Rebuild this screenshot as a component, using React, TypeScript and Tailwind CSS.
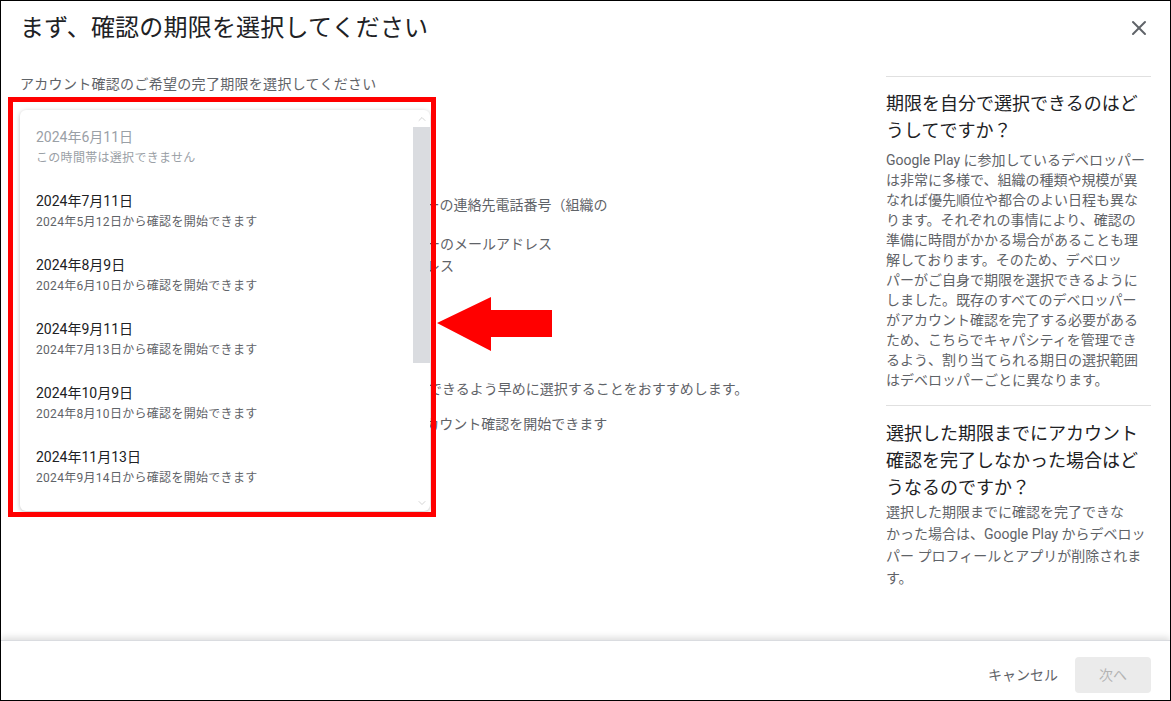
import { X, ChevronUp, ChevronDown } from 'lucide-react'

const options = [
  { date: '2024年6月11日', note: 'この時間帯は選択できません', disabled: true },
  { date: '2024年7月11日', note: '2024年5月12日から確認を開始できます' },
  { date: '2024年8月9日', note: '2024年6月10日から確認を開始できます' },
  { date: '2024年9月11日', note: '2024年7月13日から確認を開始できます' },
  { date: '2024年10月9日', note: '2024年8月10日から確認を開始できます' },
  { date: '2024年11月13日', note: '2024年9月14日から確認を開始できます' },
]

const whyLines = [
  'Google Play に参加しているデベロッパー',
  'は非常に多様で、組織の種類や規模が異',
  'なれば優先順位や都合のよい日程も異な',
  'ります。それぞれの事情により、確認の',
  '準備に時間がかかる場合があることも理',
  '解しております。そのため、デベロッ',
  'パーがご自身で期限を選択できるように',
  'しました。既存のすべてのデベロッパー',
  'がアカウント確認を完了する必要がある',
  'ため、こちらでキャパシティを管理でき',
  'るよう、割り当てられる期日の選択範囲',
  'はデベロッパーごとに異なります。',
]

const missLines = [
  '選択した期限までに確認を完了できな',
  'かった場合は、Google Play からデベロッ',
  'パー プロフィールとアプリが削除されま',
  'す。',
]

function Lines({ lines }: { lines: string[] }) {
  return (
    <>
      {lines.map((l, i) => (
        <div key={i} className="whitespace-nowrap">
          {l}
        </div>
      ))}
    </>
  )
}

export default function App() {
  return (
    <div
      className="relative w-[1171px] h-[701px] border border-black bg-white flex flex-col overflow-hidden"
      style={{ fontFamily: 'Roboto, "Noto Sans CJK JP", sans-serif' }}
    >
      {/* Header */}
      <div className="flex items-center justify-between pl-[19px] pr-[19px] pt-[11px]">
        <h1 className="text-[24px] leading-[32px] tracking-[0.2px] text-[#202124]">
          まず、確認の期限を選択してください
        </h1>
        <button className="w-6 h-6 flex items-center justify-center text-[#5f6368]">
          <X size={24} strokeWidth={2} />
        </button>
      </div>

      {/* Body */}
      <div className="flex-1 flex">
        <div className="flex-1 pl-[19px] text-[14px] text-[#5f6368]">
          <p className="pt-[30px] leading-[20px] tracking-[0.3px]">
            アカウント確認のご希望の完了期限を選択してください
          </p>
          <div className="mt-[100px] leading-[22px] whitespace-nowrap">
            ・アカウント所有者として登録した、確認済みの個人デベロッパーの連絡先電話番号（組織の
          </div>
          <div className="mt-[17px] leading-[22px] whitespace-nowrap">
            <div>・確認のためお客様の現在のアカウントに登録されたデベロッパーのメールアドレス</div>
            <div>・アカウント所有者が登録した、組織の正式な連絡先メールアドレス</div>
          </div>
          <div className="mt-[101px] leading-[22px] whitespace-nowrap">
            アカウントの確認手続きを,選択した期限までに余裕をもって完了できるよう早めに選択することをおすすめします。
          </div>
          <div className="mt-[13px] leading-[22px] whitespace-nowrap">
            選択した期限に応じて、下記の日付から準備が整い次第すぐにアカウント確認を開始できます
          </div>
        </div>

        <aside className="w-[265px] mr-[19px] mt-[32px] border-t border-[#e0e0e0]">
          <div className="pt-[13px] pb-[15px] border-b border-[#e0e0e0]">
            <h2 className="text-[18px] leading-[27px] text-[#202124]">
              <Lines lines={['期限を自分で選択できるのはど', 'うしてですか？']} />
            </h2>
            <div className="mt-[6px] text-[14px] leading-[20px] text-[#5f6368]">
              <Lines lines={whyLines} />
            </div>
          </div>
          <div className="pt-[14px]">
            <h2 className="text-[18px] leading-[27px] text-[#202124]">
              <Lines
                lines={[
                  '選択した期限までにアカウント',
                  '確認を完了しなかった場合はど',
                  'うなるのですか？',
                ]}
              />
            </h2>
            <div className="text-[14px] leading-[22px] text-[#5f6368]">
              <Lines lines={missLines} />
            </div>
          </div>
        </aside>
      </div>

      {/* Footer */}
      <div className="h-[60px] border-t border-[#dadce0] shadow-[0_-3px_6px_rgba(0,0,0,0.12)] flex justify-end items-start pt-[16px] pr-[19px]">
        <button className="h-[36px] px-4 text-[14px] text-[#5f6368]">キャンセル</button>
        <button className="ml-px w-[76px] h-[36px] rounded-[4px] bg-[#ebebeb] text-[14px] text-[#b4b4b4]">
          次へ
        </button>
      </div>

      {/* Date dropdown (open) */}
      <div className="absolute left-[19px] top-[109px] w-[410px] h-[401px] bg-white rounded-[6px] shadow-[0_1px_4px_rgba(0,0,0,0.25)] flex overflow-hidden">
        <div className="flex-1 pt-[8px] pl-[16px] overflow-hidden">
          {options.map((o) => (
            <div key={o.date} className="h-[64px] pt-[9px]">
              <div
                className={
                  o.disabled
                    ? 'text-[14px] leading-[20px] text-[#9aa0a6]'
                    : 'text-[14px] leading-[20px] text-[#202124]'
                }
              >
                {o.date}
              </div>
              <div
                className={
                  o.disabled
                    ? 'mt-[2px] text-[12px] leading-[18px] tracking-[0.3px] text-[#9aa0a6]'
                    : 'mt-[2px] text-[12px] leading-[18px] tracking-[0.3px] text-[#5f6368]'
                }
              >
                {o.note}
              </div>
            </div>
          ))}
        </div>
        <div className="w-[17px] flex flex-col">
          <div className="h-[17px] flex items-center justify-center text-[#c4c4c4]">
            <ChevronUp size={12} strokeWidth={1.5} />
          </div>
          <div className="h-[236px] bg-[#dadce0]" />
          <div className="flex-1" />
          <div className="h-[17px] flex items-center justify-center text-[#c4c4c4]">
            <ChevronDown size={12} strokeWidth={1.5} />
          </div>
        </div>
      </div>

      {/* Annotation: red frame + arrow */}
      <div className="absolute left-[7px] top-[96px] w-[428px] h-[420px] border-[5px] border-[#ff0000] pointer-events-none" />
      <svg
        className="absolute left-[435px] top-[295px]"
        width="117"
        height="56"
        viewBox="0 0 117 56"
      >
        <polygon points="1,27 55,1 55,14 116,14 116,41 55,41 55,55" fill="#ff0000" />
      </svg>
    </div>
  )
}
